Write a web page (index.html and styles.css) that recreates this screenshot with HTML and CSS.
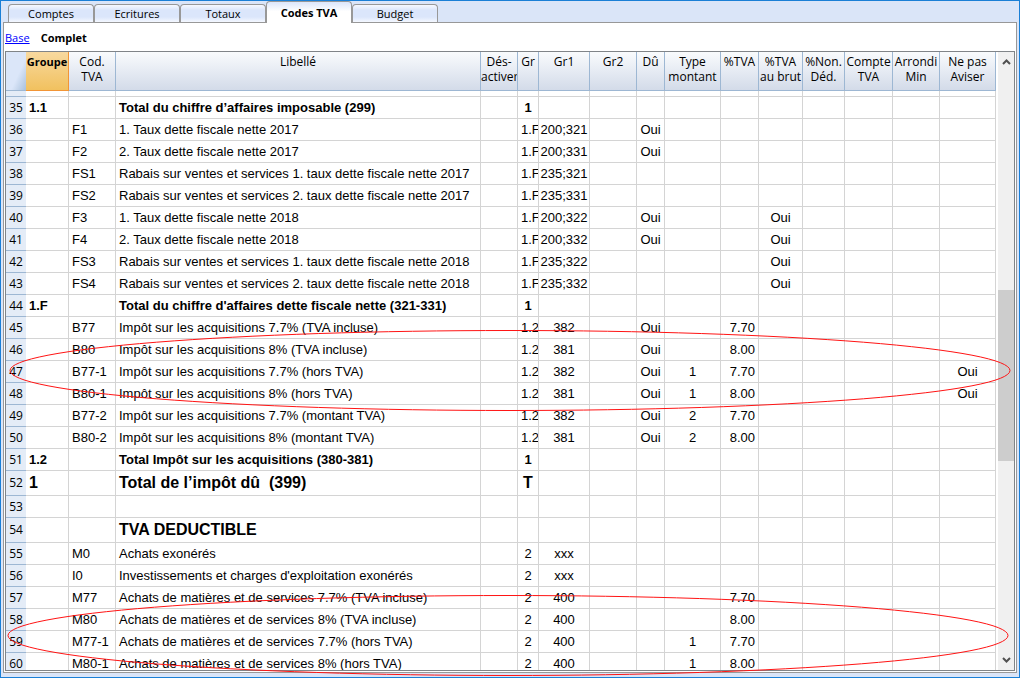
FILE: index.html
```html
<!DOCTYPE html>
<html lang="fr">
<head>
<meta charset="utf-8">
<title>Codes TVA</title>
<link rel="stylesheet" href="styles.css">
</head>
<body>
<div class="window">
  <nav class="tabs" aria-label="Tableaux">
    <button class="tab" type="button">Comptes</button>
    <button class="tab" type="button">Ecritures</button>
    <button class="tab" type="button">Totaux</button>
    <button class="tab active" type="button">Codes TVA</button>
    <button class="tab" type="button">Budget</button>
  </nav>
  <main class="panel">
    <div class="views"><a href="#base">Base</a><strong>Complet</strong></div>
    <div class="sheet">
      <div class="grid-area">
        <table class="grid">
          <colgroup>
            <col class="c-num"><col class="c-groupe"><col class="c-code"><col class="c-lib"><col class="c-des"><col class="c-gr"><col class="c-gr1"><col class="c-gr2"><col class="c-du"><col class="c-type"><col class="c-tva"><col class="c-brut"><col class="c-non"><col class="c-compte"><col class="c-arr"><col class="c-avis">
          </colgroup>
          <thead>
            <tr>
              <th class="corner"></th><th class="selected">Groupe</th><th>Cod.<br>TVA</th><th>Libellé</th><th>Dés-<br>activer</th><th>Gr</th><th>Gr1</th><th>Gr2</th><th>Dû</th><th>Type<br>montant</th><th>%TVA</th><th>%TVA<br>au brut</th><th>%Non.<br>Déd.</th><th>Compte<br>TVA</th><th>Arrondi<br>Min</th><th>Ne pas<br>Aviser</th>
            </tr>
          </thead>
          <tbody>
            <tr class="sliver"><th></th><td></td><td></td><td></td><td></td><td></td><td></td><td></td><td></td><td></td><td></td><td></td><td></td><td></td><td></td><td></td></tr>
            <tr class="total"><th>35</th><td>1.1</td><td></td><td>Total du chiffre d’affaires imposable (299)</td><td></td><td>1</td><td></td><td></td><td></td><td></td><td></td><td></td><td></td><td></td><td></td><td></td></tr>
            <tr><th>36</th><td></td><td>F1</td><td>1. Taux dette fiscale nette 2017</td><td></td><td>1.F</td><td>200;321</td><td></td><td>Oui</td><td></td><td></td><td></td><td></td><td></td><td></td><td></td></tr>
            <tr><th>37</th><td></td><td>F2</td><td>2. Taux dette fiscale nette 2017</td><td></td><td>1.F</td><td>200;331</td><td></td><td>Oui</td><td></td><td></td><td></td><td></td><td></td><td></td><td></td></tr>
            <tr><th>38</th><td></td><td>FS1</td><td>Rabais sur ventes et services 1. taux dette fiscale nette 2017</td><td></td><td>1.F</td><td>235;321</td><td></td><td></td><td></td><td></td><td></td><td></td><td></td><td></td><td></td></tr>
            <tr><th>39</th><td></td><td>FS2</td><td>Rabais sur ventes et services 2. taux dette fiscale nette 2017</td><td></td><td>1.F</td><td>235;331</td><td></td><td></td><td></td><td></td><td></td><td></td><td></td><td></td><td></td></tr>
            <tr><th>40</th><td></td><td>F3</td><td>1. Taux dette fiscale nette 2018</td><td></td><td>1.F</td><td>200;322</td><td></td><td>Oui</td><td></td><td></td><td>Oui</td><td></td><td></td><td></td><td></td></tr>
            <tr><th>41</th><td></td><td>F4</td><td>2. Taux dette fiscale nette 2018</td><td></td><td>1.F</td><td>200;332</td><td></td><td>Oui</td><td></td><td></td><td>Oui</td><td></td><td></td><td></td><td></td></tr>
            <tr><th>42</th><td></td><td>FS3</td><td>Rabais sur ventes et services 1. taux dette fiscale nette 2018</td><td></td><td>1.F</td><td>235;322</td><td></td><td></td><td></td><td></td><td>Oui</td><td></td><td></td><td></td><td></td></tr>
            <tr><th>43</th><td></td><td>FS4</td><td>Rabais sur ventes et services 2. taux dette fiscale nette 2018</td><td></td><td>1.F</td><td>235;332</td><td></td><td></td><td></td><td></td><td>Oui</td><td></td><td></td><td></td><td></td></tr>
            <tr class="total"><th>44</th><td>1.F</td><td></td><td>Total du chiffre d'affaires dette fiscale nette (321-331)</td><td></td><td>1</td><td></td><td></td><td></td><td></td><td></td><td></td><td></td><td></td><td></td><td></td></tr>
            <tr><th>45</th><td></td><td>B77</td><td>Impôt sur les acquisitions 7.7% (TVA incluse)</td><td></td><td>1.2</td><td>382</td><td></td><td>Oui</td><td></td><td>7.70</td><td></td><td></td><td></td><td></td><td></td></tr>
            <tr><th>46</th><td></td><td>B80</td><td>Impôt sur les acquisitions 8% (TVA incluse)</td><td></td><td>1.2</td><td>381</td><td></td><td>Oui</td><td></td><td>8.00</td><td></td><td></td><td></td><td></td><td></td></tr>
            <tr><th>47</th><td></td><td>B77-1</td><td>Impôt sur les acquisitions 7.7% (hors TVA)</td><td></td><td>1.2</td><td>382</td><td></td><td>Oui</td><td>1</td><td>7.70</td><td></td><td></td><td></td><td></td><td>Oui</td></tr>
            <tr><th>48</th><td></td><td>B80-1</td><td>Impôt sur les acquisitions 8% (hors TVA)</td><td></td><td>1.2</td><td>381</td><td></td><td>Oui</td><td>1</td><td>8.00</td><td></td><td></td><td></td><td></td><td>Oui</td></tr>
            <tr><th>49</th><td></td><td>B77-2</td><td>Impôt sur les acquisitions 7.7% (montant TVA)</td><td></td><td>1.2</td><td>382</td><td></td><td>Oui</td><td>2</td><td>7.70</td><td></td><td></td><td></td><td></td><td></td></tr>
            <tr><th>50</th><td></td><td>B80-2</td><td>Impôt sur les acquisitions 8% (montant TVA)</td><td></td><td>1.2</td><td>381</td><td></td><td>Oui</td><td>2</td><td>8.00</td><td></td><td></td><td></td><td></td><td></td></tr>
            <tr class="total"><th>51</th><td>1.2</td><td></td><td>Total Impôt sur les acquisitions (380-381)</td><td></td><td>1</td><td></td><td></td><td></td><td></td><td></td><td></td><td></td><td></td><td></td><td></td></tr>
            <tr class="heading"><th>52</th><td>1</td><td></td><td>Total de l’impôt dû&nbsp; (399)</td><td></td><td>T</td><td></td><td></td><td></td><td></td><td></td><td></td><td></td><td></td><td></td><td></td></tr>
            <tr><th>53</th><td></td><td></td><td></td><td></td><td></td><td></td><td></td><td></td><td></td><td></td><td></td><td></td><td></td><td></td><td></td></tr>
            <tr class="heading"><th>54</th><td></td><td></td><td>TVA DEDUCTIBLE</td><td></td><td></td><td></td><td></td><td></td><td></td><td></td><td></td><td></td><td></td><td></td><td></td></tr>
            <tr><th>55</th><td></td><td>M0</td><td>Achats exonérés</td><td></td><td>2</td><td>xxx</td><td></td><td></td><td></td><td></td><td></td><td></td><td></td><td></td><td></td></tr>
            <tr><th>56</th><td></td><td>I0</td><td>Investissements et charges d'exploitation exonérés</td><td></td><td>2</td><td>xxx</td><td></td><td></td><td></td><td></td><td></td><td></td><td></td><td></td><td></td></tr>
            <tr><th>57</th><td></td><td>M77</td><td>Achats de matières et de services 7.7% (TVA incluse)</td><td></td><td>2</td><td>400</td><td></td><td></td><td></td><td>7.70</td><td></td><td></td><td></td><td></td><td></td></tr>
            <tr><th>58</th><td></td><td>M80</td><td>Achats de matières et de services 8% (TVA incluse)</td><td></td><td>2</td><td>400</td><td></td><td></td><td></td><td>8.00</td><td></td><td></td><td></td><td></td><td></td></tr>
            <tr><th>59</th><td></td><td>M77-1</td><td>Achats de matières et de services 7.7% (hors TVA)</td><td></td><td>2</td><td>400</td><td></td><td></td><td>1</td><td>7.70</td><td></td><td></td><td></td><td></td><td></td></tr>
            <tr><th>60</th><td></td><td>M80-1</td><td>Achats de matières et de services 8% (hors TVA)</td><td></td><td>2</td><td>400</td><td></td><td></td><td>1</td><td>8.00</td><td></td><td></td><td></td><td></td><td></td></tr>
          </tbody>
        </table>
      </div>
      <div class="scrollbar">
        <button type="button" aria-label="Défiler vers le haut"><svg width="9" height="8" viewBox="0 0 9 8"><path d="M1 6 4.500 2.500 8 6"/></svg></button>
        <div class="track"><div class="before"></div><div class="thumb"></div><div class="after"></div></div>
        <button type="button" aria-label="Défiler vers le bas"><svg width="9" height="8" viewBox="0 0 9 8"><path d="M1 2 4.500 5.500 8 2"/></svg></button>
      </div>
    </div>
  </main>
  <svg class="marks" viewBox="0 0 1020 678" preserveAspectRatio="none" aria-hidden="true">
    <ellipse cx="510" cy="370.500" rx="500" ry="40"/>
    <ellipse cx="508" cy="635.500" rx="500" ry="40"/>
  </svg>
</div>
</body>
</html>
```
FILE: styles.css
```css
* { box-sizing: border-box; }
body { margin: 0; color: #000; font: 11px/15px "Open Sans", "Noto Sans", sans-serif; }
button { font: inherit; color: inherit; padding: 0; }

.window {
  position: relative;
  display: flex;
  flex-direction: column;
  height: 100vh;
  padding: 0 2px 4px;
  border: 1px solid #1a7fd6;
  background: #dae5f8;
  overflow: hidden;
}
.marks { position: absolute; top: -1px; left: -1px; width: calc(100% + 2px); height: calc(100% + 2px); pointer-events: none; }
.marks ellipse { fill: none; stroke: #ff1414; stroke-width: 1; vector-effect: non-scaling-stroke; }

.tabs { display: flex; align-items: flex-end; height: 21px; padding-left: 5px; }
.tab {
  width: 86px;
  height: 18px;
  border: 1px solid #989898;
  border-bottom: 0;
  border-radius: 4px 4px 0 0;
  background: linear-gradient(#f6f9ff, #dbe6fb 30%, #dbe6fb 70%, #f4f8ff);
}
.tab.active { z-index: 1; height: 22px; margin-bottom: -1px; background: linear-gradient(#dbe6fb, #fff 45%); font-weight: 700; }

.panel { display: flex; flex-direction: column; flex: 1; min-height: 0; padding: 0 1px 1px; border: 1px solid #989898; background: #fff; }
.views { display: flex; gap: 11px; height: 28px; padding-top: 7px; }
.views a { color: #0000ff; }

.sheet { display: flex; flex: 1; min-height: 0; border: 1px solid #808488; }
.grid-area { flex: 1; min-width: 0; overflow: hidden; }

.grid { width: 100%; border-collapse: separate; border-spacing: 0; table-layout: fixed; font-size: 12px; }
.c-num { width: 20px; } .c-groupe { width: 43px; } .c-code { width: 47px; }
.c-des { width: 37px; } .c-gr { width: 21px; } .c-gr1 { width: 51px; }
.c-gr2 { width: 47px; } .c-du { width: 28px; } .c-type { width: 56px; }
.c-tva { width: 38px; } .c-brut { width: 44px; } .c-non { width: 42px; }
.c-compte { width: 48px; } .c-arr { width: 47px; } .c-avis { width: 56px; }

.grid th, .grid td { padding: 0; white-space: nowrap; overflow: hidden; text-align: center; }
.grid thead th {
  height: 39px;
  padding-top: 2px;
  vertical-align: top;
  font-weight: 400;
  border-right: 1px solid #9db7d3;
  border-bottom: 1px solid #9db7d3;
  background: linear-gradient(#f9fbfd, #d3dbe9);
}
.grid thead .corner { border-right: 0; background: linear-gradient(115deg, #dbe6f9 60%, #a9c1dc); }
.grid thead .selected { font-size: 11px; font-weight: 700; border-color: #f29536; background: linear-gradient(#f8d99f, #f1c15f); }

tbody tr { height: 22px; }
tbody .sliver { height: 6px; }
tbody .heading { height: 25px; }
tbody th { font-weight: 400; line-height: 20px; background: #e4ecf7; border-bottom: 1px solid #9db7d3; }
tbody td { font: 13px/20px "Liberation Sans", Arial, sans-serif; border-right: 1px solid #d4d4d4; border-bottom: 1px solid #d4d4d4; }
.sliver th, .sliver td { line-height: 5px; }
.grid td:nth-child(2), .grid td:nth-child(3), .grid td:nth-child(4) { padding-left: 3px; text-align: left; }
.grid td:nth-child(6) { padding: 0 3px; }
.grid td:nth-child(11) { padding-right: 3px; text-align: right; }
.total td { font-weight: 700; }
.heading td { font-size: 16px; line-height: 24px; font-weight: 700; }

.scrollbar { display: flex; flex-direction: column; width: 16px; margin-left: 2px; background: #f0f0f0; }
.scrollbar button { display: flex; align-items: center; justify-content: center; height: 20px; border: 0; background: none; }
.scrollbar path { fill: none; stroke: #505050; stroke-width: 2; }
.track { display: flex; flex-direction: column; flex: 1; }
.before { flex: 218; }
.thumb { flex: 171; background: #cdcdcd; }
.after { flex: 189; }
```
